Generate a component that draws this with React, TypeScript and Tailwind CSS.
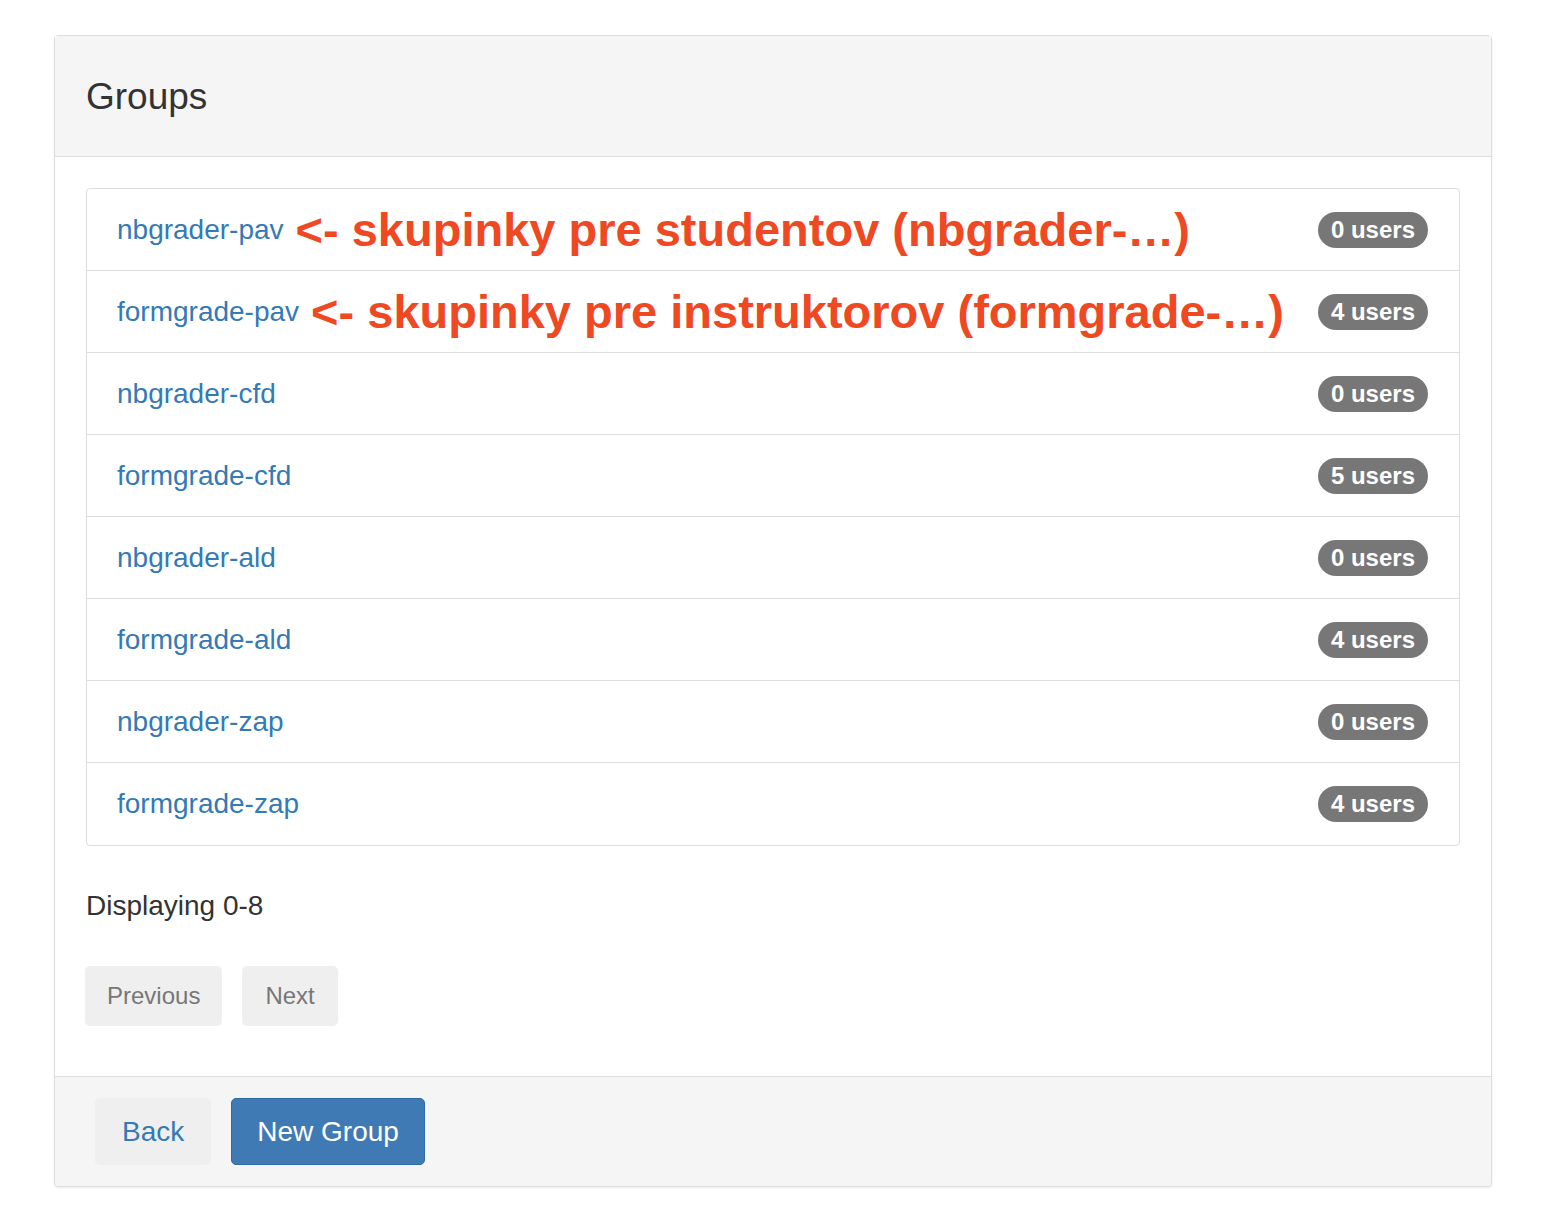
import React from 'react';

const groups = [
  { name: 'nbgrader-pav', users: 0, note: '<- skupinky pre studentov (nbgrader-…)' },
  { name: 'formgrade-pav', users: 4, note: '<- skupinky pre instruktorov (formgrade-…)' },
  { name: 'nbgrader-cfd', users: 0 },
  { name: 'formgrade-cfd', users: 5 },
  { name: 'nbgrader-ald', users: 0 },
  { name: 'formgrade-ald', users: 4 },
  { name: 'nbgrader-zap', users: 0 },
  { name: 'formgrade-zap', users: 4 },
];

const App = () => {
  return (
    <div className="min-h-[1230px] bg-white pt-[35px] font-['Liberation_Sans',Arial,sans-serif]">
      <div className="ml-[54px] w-[1438px] border border-[#dddddd] rounded-[4px] shadow-[0_1px_2px_rgba(0,0,0,0.08)] bg-white">
        <div className="h-[121px] flex items-center px-[31px] bg-[#f5f5f5] border-b border-[#dddddd]">
          <h3 className="text-[37px] text-[#333333] leading-none">Groups</h3>
        </div>

        <div className="px-[31px] pt-[31px] pb-[50px]">
          <div className="border border-[#dddddd] rounded-[4px] divide-y divide-[#dddddd]">
            {groups.map((g) => (
              <div key={g.name} className="h-[82px] flex items-center justify-between pl-[30px] pr-[31px]">
                <div className="flex items-center">
                  <a className="text-[28px] leading-[40px] text-[#337ab7]">{g.name}</a>
                  {g.note && (
                    <span className="ml-[12px] text-[47px] leading-none font-bold text-[#ee4922] whitespace-nowrap">
                      {g.note}
                    </span>
                  )}
                </div>
                <span className="h-[36px] px-[13px] flex items-center rounded-full bg-[#777777] text-white font-bold text-[24px] leading-none">
                  {g.users} users
                </span>
              </div>
            ))}
          </div>

          <p className="mt-[40px] text-[28px] leading-[40px] text-[#333333]">Displaying 0-8</p>

          <div className="mt-[40px] flex gap-[20px] -ml-[1px]">
            <button className="h-[60px] px-[22px] rounded-[5px] bg-[#efefef] text-[#777777] text-[24px]">
              Previous
            </button>
            <button className="h-[60px] px-[23px] rounded-[5px] bg-[#efefef] text-[#777777] text-[24px]">
              Next
            </button>
          </div>
        </div>

        <div className="h-[110px] flex items-center gap-[20px] pl-[40px] bg-[#f5f5f5] border-t border-[#dddddd] rounded-b-[4px]">
          <button className="h-[67px] px-[27px] rounded-[5px] bg-[#efefef] text-[#337ab7] text-[28px]">
            Back
          </button>
          <button className="h-[67px] px-[25px] rounded-[5px] bg-[#3f7ab5] border border-[#2e6da4] text-white text-[28px]">
            New Group
          </button>
        </div>
      </div>
    </div>
  );
};

export default App;
